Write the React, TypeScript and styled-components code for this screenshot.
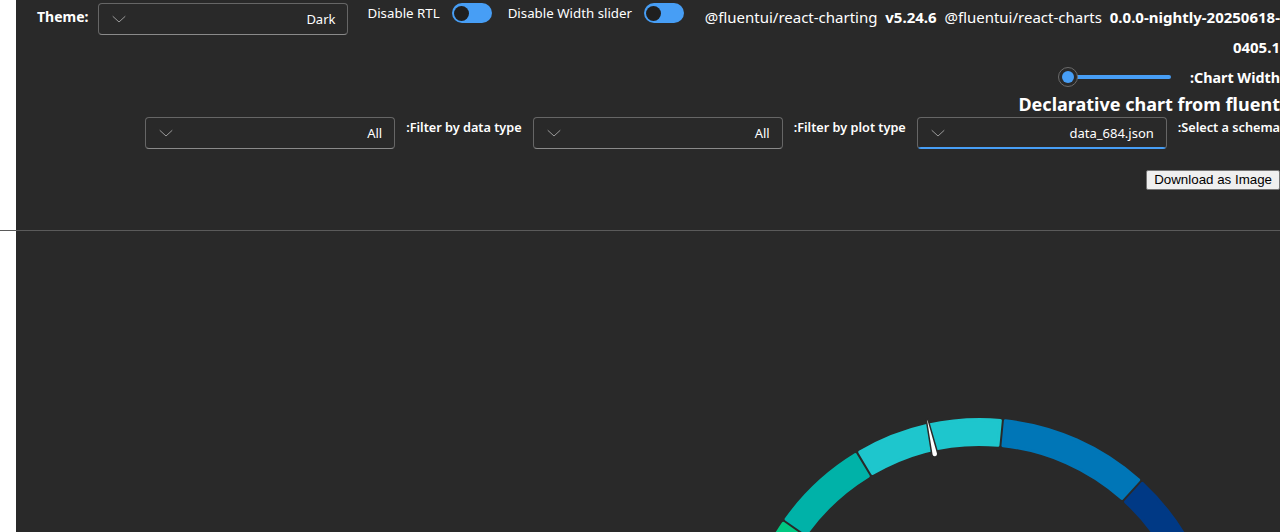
import React from 'react';
import styled, { createGlobalStyle } from 'styled-components';

const FONT = '"Noto Sans", "Open Sans", Arial, sans-serif';

const GlobalStyle = createGlobalStyle`
  html, body {
    margin: 0;
    padding: 0;
    background: #ffffff;
    overflow: hidden;
  }
  body {
    font-family: ${FONT};
  }
`;

const Page = styled.div`
  width: 1280px;
  height: 532px;
  display: flex;
  flex-direction: column;
  overflow: hidden;
  background: #ffffff;
`;

const Header = styled.div`
  margin-left: 16px;
  background: #292929;
  color: #ffffff;
  font-family: ${FONT};
  font-size: 14px;
  padding-bottom: 40px;
  display: flex;
  flex-direction: column;
`;

const TopRow = styled.div`
  display: flex;
  align-items: flex-start;
  padding-left: 21px;
`;

const ThemeLabel = styled.span`
  font-weight: 700;
  font-size: 14px;
  line-height: 20px;
  margin-top: 7px;
  margin-right: 10px;
  white-space: nowrap;
`;

const DropdownBox = styled.div<{ $focused?: boolean; $mt?: number }>`
  position: relative;
  box-sizing: border-box;
  width: 250px;
  height: 32px;
  flex: none;
  margin-top: ${(p) => p.$mt ?? 0}px;
  border: 1px solid #666666;
  border-bottom-color: ${(p) => (p.$focused ? '#479ef5' : '#8a8a8a')};
  border-radius: 4px;
  background: #292929;
  display: flex;
  align-items: center;
  padding: 0 12px 0 12px;
  overflow: hidden;
  &::after {
    content: '';
    display: ${(p) => (p.$focused ? 'block' : 'none')};
    position: absolute;
    left: 0;
    right: 0;
    bottom: -1px;
    height: 2px;
    background: #479ef5;
  }
`;

const DropdownValue = styled.span`
  flex: 1;
  text-align: right;
  font-size: 13px;
  color: #ffffff;
  white-space: nowrap;
`;

const Chevron = () => (
  <svg width="16" height="16" viewBox="0 0 16 16" fill="none">
    <path d="M2 5.5 L8 11 L14 5.5" stroke="#9a9a9a" strokeWidth="1" strokeLinecap="round" strokeLinejoin="round" />
  </svg>
);

const Dropdown = ({ value, focused, mt }: { value: string; focused?: boolean; mt?: number }) => (
  <DropdownBox $focused={focused} $mt={mt}>
    <Chevron />
    <DropdownValue>{value}</DropdownValue>
  </DropdownBox>
);

const ToggleGroup = styled.div<{ $ml: number }>`
  display: flex;
  align-items: center;
  gap: 12px;
  margin-left: ${(p) => p.$ml}px;
  margin-top: 3px;
  height: 20px;
  flex: none;
`;

const ToggleLabel = styled.span`
  font-size: 13.3px;
  line-height: 20px;
  white-space: nowrap;
`;

const SwitchTrack = styled.div`
  box-sizing: border-box;
  width: 40px;
  height: 20px;
  border-radius: 10px;
  background: #479ef5;
  display: flex;
  align-items: center;
  padding-left: 2px;
`;

const SwitchThumb = styled.div`
  width: 15px;
  height: 15px;
  border-radius: 50%;
  background: #1f1f1f;
`;

const VersionText = styled.div`
  flex: 1;
  margin-left: 8px;
  margin-top: 2px;
  text-align: right;
  line-height: 30px;
  font-size: 15px;
  min-width: 0;
`;

const Bold = styled.b`
  font-weight: 700;
`;

const WidthRow = styled.div`
  display: flex;
  justify-content: flex-end;
  align-items: center;
  gap: 19px;
  margin-top: 5px;
  height: 20px;
`;

const SliderRail = styled.div`
  position: relative;
  width: 103px;
  height: 4px;
  border-radius: 2px;
  background: #479ef5;
  margin-left: 10px;
`;

const SliderThumb = styled.div`
  position: absolute;
  left: -10px;
  top: -8px;
  box-sizing: border-box;
  width: 20px;
  height: 20px;
  border-radius: 50%;
  background: #292929;
  border: 1px solid #6b6b6b;
  display: flex;
  align-items: center;
  justify-content: center;
  &::before {
    content: '';
    width: 12px;
    height: 12px;
    border-radius: 50%;
    background: #479ef5;
  }
`;

const BoldLabel = styled.span`
  font-weight: 700;
  font-size: 14.3px;
  white-space: nowrap;
`;

const Title = styled.div`
  margin-top: 4px;
  text-align: right;
  font-weight: 700;
  font-size: 18px;
  line-height: 26px;
  white-space: nowrap;
`;

const FilterRow = styled.div`
  display: flex;
  justify-content: flex-end;
  align-items: flex-start;
  gap: 11px;
`;

const FilterLabel = styled.span`
  font-weight: 600;
  font-size: 12.7px;
  line-height: 20px;
  white-space: nowrap;
`;

const ButtonRow = styled.div`
  display: flex;
  justify-content: flex-end;
  margin-top: 21px;
`;

const DownloadButton = styled.button`
  font-family: "Liberation Sans", Arial, sans-serif;
  font-size: 13.333px;
  color: #000000;
  background: #efefef;
  border: 1px solid #767676;
  border-radius: 2px;
  padding: 1px 7px;
  height: 20px;
  line-height: 16px;
`;

const Divider = styled.div`
  height: 1px;
  background: #5a5a5a;
  flex: none;
`;

const ChartArea = styled.div`
  margin-left: 16px;
  flex: 1;
  background: #292929;
`;

const CX = 964;
const CY = 427;
const RO = 240;
const RI = 212;

const rad = (d: number) => (d * Math.PI) / 180;
const pt = (a: number, r: number) => `${(CX + r * Math.cos(rad(a))).toFixed(2)} ${(CY - r * Math.sin(rad(a))).toFixed(2)}`;

function arcPath(a0: number, a1: number) {
  const inset = 1.5;
  const half = 2.5;
  const ro = RO - inset;
  const ri = RI + inset;
  const po = (half / ro) * (180 / Math.PI);
  const pi = (half / ri) * (180 / Math.PI);
  const o0 = a0 - po;
  const o1 = a1 + po;
  const i0 = a0 - pi;
  const i1 = a1 + pi;
  const large = o0 - o1 > 180 ? 1 : 0;
  return `M ${pt(o0, ro)} A ${ro} ${ro} 0 ${large} 1 ${pt(o1, ro)} L ${pt(i1, ri)} A ${ri} ${ri} 0 ${large} 0 ${pt(i0, ri)} Z`;
}

const segments: { from: number; to: number; color: string }[] = [
  { from: 181, to: 145, color: '#00c882' },
  { from: 145, to: 120.9, color: '#00b2a8' },
  { from: 120.9, to: 84.5, color: '#1ec6cd' },
  { from: 84.5, to: 47.7, color: '#0076b7' },
  { from: 47.7, to: -1, color: '#003985' },
];

const Gauge = () => (
  <svg width="1264" height="301" viewBox="0 0 1264 301" style={{ display: 'block' }}>
    {segments.map((s) => (
      <path
        key={s.from}
        d={arcPath(s.from, s.to)}
        fill={s.color}
        stroke={s.color}
        strokeWidth={3}
        strokeLinejoin="round"
      />
    ))}
    <g transform={`translate(${CX} ${CY}) rotate(-12.5)`}>
      <path
        d="M -3 -209 L -0.9 -244 L 0.9 -244 L 3 -209 A 3 3 0 0 1 -3 -209 Z"
        fill="#ffffff"
        stroke="#292929"
        strokeWidth={1.5}
        strokeLinejoin="round"
      />
    </g>
  </svg>
);

export default function App() {
  return (
    <>
      <GlobalStyle />
      <Page>
        <Header>
          <TopRow>
            <ThemeLabel>Theme:</ThemeLabel>
            <Dropdown value="Dark" mt={3} />
            <ToggleGroup $ml={19}>
              <ToggleLabel>Disable RTL</ToggleLabel>
              <SwitchTrack>
                <SwitchThumb />
              </SwitchTrack>
            </ToggleGroup>
            <ToggleGroup $ml={16}>
              <ToggleLabel>Disable Width slider</ToggleLabel>
              <SwitchTrack>
                <SwitchThumb />
              </SwitchTrack>
            </ToggleGroup>
            <VersionText>
              @fluentui/react-charting&nbsp; <Bold>v5.24.6</Bold>&nbsp; @fluentui/react-charts&nbsp;{' '}
              <Bold>
                0.0.0-nightly-20250618-<wbr />0405.1
              </Bold>
            </VersionText>
          </TopRow>
          <WidthRow>
            <SliderRail>
              <SliderThumb />
            </SliderRail>
            <BoldLabel>:Chart Width</BoldLabel>
          </WidthRow>
          <Title>Declarative chart from fluent</Title>
          <FilterRow>
            <Dropdown value="All" />
            <FilterLabel>:Filter by data type</FilterLabel>
            <Dropdown value="All" />
            <FilterLabel>:Filter by plot type</FilterLabel>
            <Dropdown value="data_684.json" focused />
            <FilterLabel>:Select a schema</FilterLabel>
          </FilterRow>
          <ButtonRow>
            <DownloadButton>Download as Image</DownloadButton>
          </ButtonRow>
        </Header>
        <Divider />
        <ChartArea>
          <Gauge />
        </ChartArea>
      </Page>
    </>
  );
}
